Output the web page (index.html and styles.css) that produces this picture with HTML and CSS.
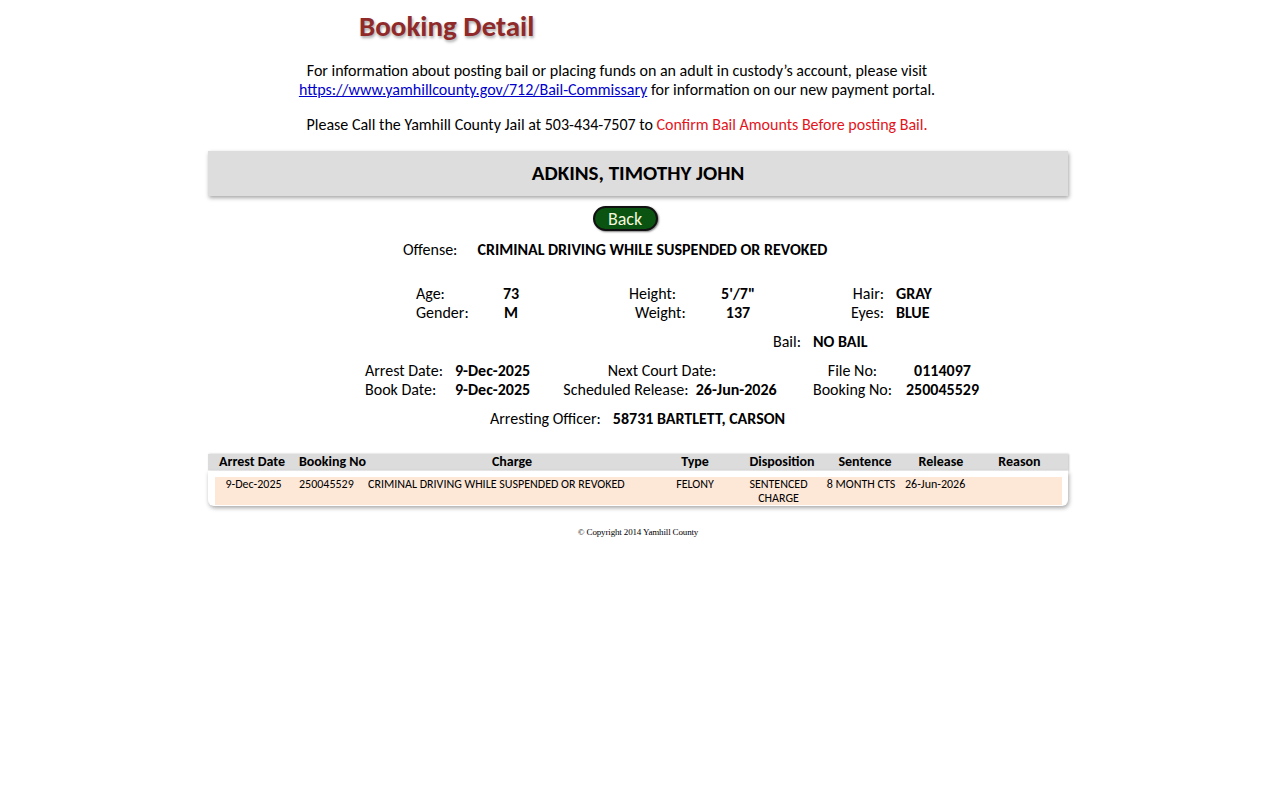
FILE: index.html
```html
<!DOCTYPE html>
<html lang="en">

<head>
    <meta charset="UTF-8">
    <meta name="viewport" content="width=device-width, initial-scale=1.0">
    <title>Booking Detail</title>
    <link rel="stylesheet" href="styles.css">
</head>

<body>
    <div class="page">
        <h1 class="title">Booking Detail</h1>

        <div class="notice">
            <p>For information about posting bail or placing funds on an adult in custody’s account, please visit<br>
                <a href="#">https://www.yamhillcounty.gov/712/Bail-Commissary</a> for information on our new payment portal.</p>
            <p>Please Call the Yamhill County Jail at 503-434-7507 to <span class="warn">Confirm Bail Amounts Before posting Bail.</span></p>
        </div>

        <div class="name-bar">ADKINS, TIMOTHY JOHN</div>

        <div class="back-row">
            <a href="#" class="back-btn">Back</a>
        </div>

        <div class="offense">
            <span>Offense:</span>
            <b>CRIMINAL DRIVING WHILE SUSPENDED OR REVOKED</b>
        </div>

        <div class="person">
            <span>Age:</span><b class="center">73</b><span></span>
            <span>Height:</span><b class="center">5'/7"</b>
            <span class="right">Hair:</span><b class="val">GRAY</b>

            <span>Gender:</span><b class="center">M</b><span></span>
            <span class="shift">Weight:</span><b class="center">137</b>
            <span class="right">Eyes:</span><b class="val">BLUE</b>
        </div>

        <div class="bail">
            <span>Bail:</span>
            <b>NO BAIL</b>
        </div>

        <div class="dates">
            <span>Arrest Date:</span><b>9-Dec-2025</b>
            <span class="middle first">Next Court Date:</span>
            <span class="center pad">File No:</span><b class="center">0114097</b>

            <span>Book Date:</span><b>9-Dec-2025</b>
            <span class="middle">Scheduled Release:&nbsp; <b>26-Jun-2026</b></span>
            <span class="center pad">Booking No:</span><b class="center">250045529</b>
        </div>

        <div class="officer">
            <span>Arresting Officer:</span>
            <b>58731 BARTLETT, CARSON</b>
        </div>

        <div class="charges">
            <div class="charges-head">
                <span>Arrest Date</span>
                <span>Booking No</span>
                <span>Charge</span>
                <span>Type</span>
                <span>Disposition</span>
                <span>Sentence</span>
                <span>Release</span>
                <span class="last">Reason</span>
            </div>
            <div class="charges-card">
                <div class="charges-row">
                    <span class="c">9-Dec-2025</span>
                    <span class="l">250045529</span>
                    <span class="l">CRIMINAL DRIVING WHILE SUSPENDED OR REVOKED</span>
                    <span class="c">FELONY</span>
                    <span class="c">SENTENCED<br>CHARGE</span>
                    <span class="c">8 MONTH CTS</span>
                    <span class="l">26-Jun-2026</span>
                    <span></span>
                </div>
            </div>
        </div>

        <p class="copyright">© Copyright 2014 Yamhill County</p>
    </div>
</body>

</html>
```

FILE: styles.css
```css
* {
    box-sizing: border-box;
}

body {
    margin: 0;
    font-family: Carlito, Calibri, Lato, sans-serif;
    font-size: 16px;
    line-height: 19px;
    color: #000;
    background-color: #fff;
}

.page {
    width: 860px;
    margin-left: calc(50% - 432px);
}

.title {
    margin: 8px 0 0 151px;
    font-size: 29px;
    line-height: 36px;
    font-weight: bold;
    color: #902a2a;
    text-shadow: 1px 2px 3px rgba(0, 0, 0, 0.35);
}

.notice {
    padding-right: 42px;
    text-align: center;
}

.notice p {
    margin: 17px 0 0;
}

.notice p + p {
    margin-top: 16px;
}

.notice a {
    color: #0000cc;
}

.warn {
    color: #e3141b;
}

.name-bar {
    margin-top: 17px;
    height: 45px;
    line-height: 45px;
    text-align: center;
    font-size: 21px;
    font-weight: bold;
    background-color: #dddddd;
    box-shadow: 1px 2px 4px rgba(0, 0, 0, 0.35);
}

.back-row {
    display: flex;
    justify-content: center;
    margin-top: 10px;
    padding-right: 26px;
}

.back-btn {
    display: block;
    width: 65px;
    height: 25px;
    line-height: 22px;
    text-align: center;
    font-size: 18px;
    color: #f4f7dc;
    text-decoration: none;
    background-color: #0b5310;
    border: 2px solid #111;
    border-radius: 13px;
    box-shadow: 1px 1px 2px rgba(0, 0, 0, 0.5);
}

.offense {
    display: flex;
    gap: 20px;
    margin: 9px 0 0 195px;
}

.person {
    display: grid;
    grid-template-columns: 64px 62px 87px 71px 76px 108px auto;
    margin: 25px 0 0 208px;
}

.center {
    text-align: center;
}

.right {
    text-align: right;
}

.val {
    padding-left: 12px;
}

.shift {
    padding-left: 6px;
}

.bail {
    display: flex;
    gap: 12px;
    margin: 10px 0 0 565px;
}

.dates {
    display: grid;
    grid-template-columns: 90px 100px 230px 120px 75px;
    margin: 10px 0 0 157px;
}

.middle {
    text-align: center;
}

.middle.first {
    padding-right: 16px;
}

.pad {
    padding-left: 15px;
}

.officer {
    display: flex;
    gap: 12px;
    margin: 10px 0 0 282px;
}

.charges {
    margin-top: 26px;
}

.charges-head {
    display: grid;
    grid-template-columns: 88px 73px 286px 80px 94px 72px 80px auto;
    height: 17px;
    line-height: 16px;
    font-size: 14px;
    font-weight: bold;
    text-align: center;
    background-color: #dcdcdc;
    border-bottom: 1px solid #f0f0f0;
    box-shadow: 1px 0 2px rgba(0, 0, 0, 0.25);
}

.charges-head .last {
    padding-right: 10px;
}

.charges-card {
    padding: 6px 6px 1px 7px;
    background-color: #fff;
    border-radius: 0 0 6px 6px;
    box-shadow: 1px 2px 4px rgba(0, 0, 0, 0.35);
}

.charges-row {
    display: grid;
    grid-template-columns: 77px 73px 290px 80px 87px 78px 80px auto;
    min-height: 28px;
    font-size: 12px;
    line-height: 14px;
    background-color: #fde8d8;
}

.charges-row .c {
    text-align: center;
}

.charges-row .l {
    padding-left: 7px;
}

.charges-row .l:nth-child(3) {
    padding-left: 3px;
}

.charges-row .l:nth-child(7) {
    padding-left: 5px;
}

.copyright {
    margin: 19px 0 0;
    font-family: "Liberation Serif", serif;
    font-size: 9px;
    line-height: 14px;
    text-align: center;
    letter-spacing: -0.15px;
}
```
